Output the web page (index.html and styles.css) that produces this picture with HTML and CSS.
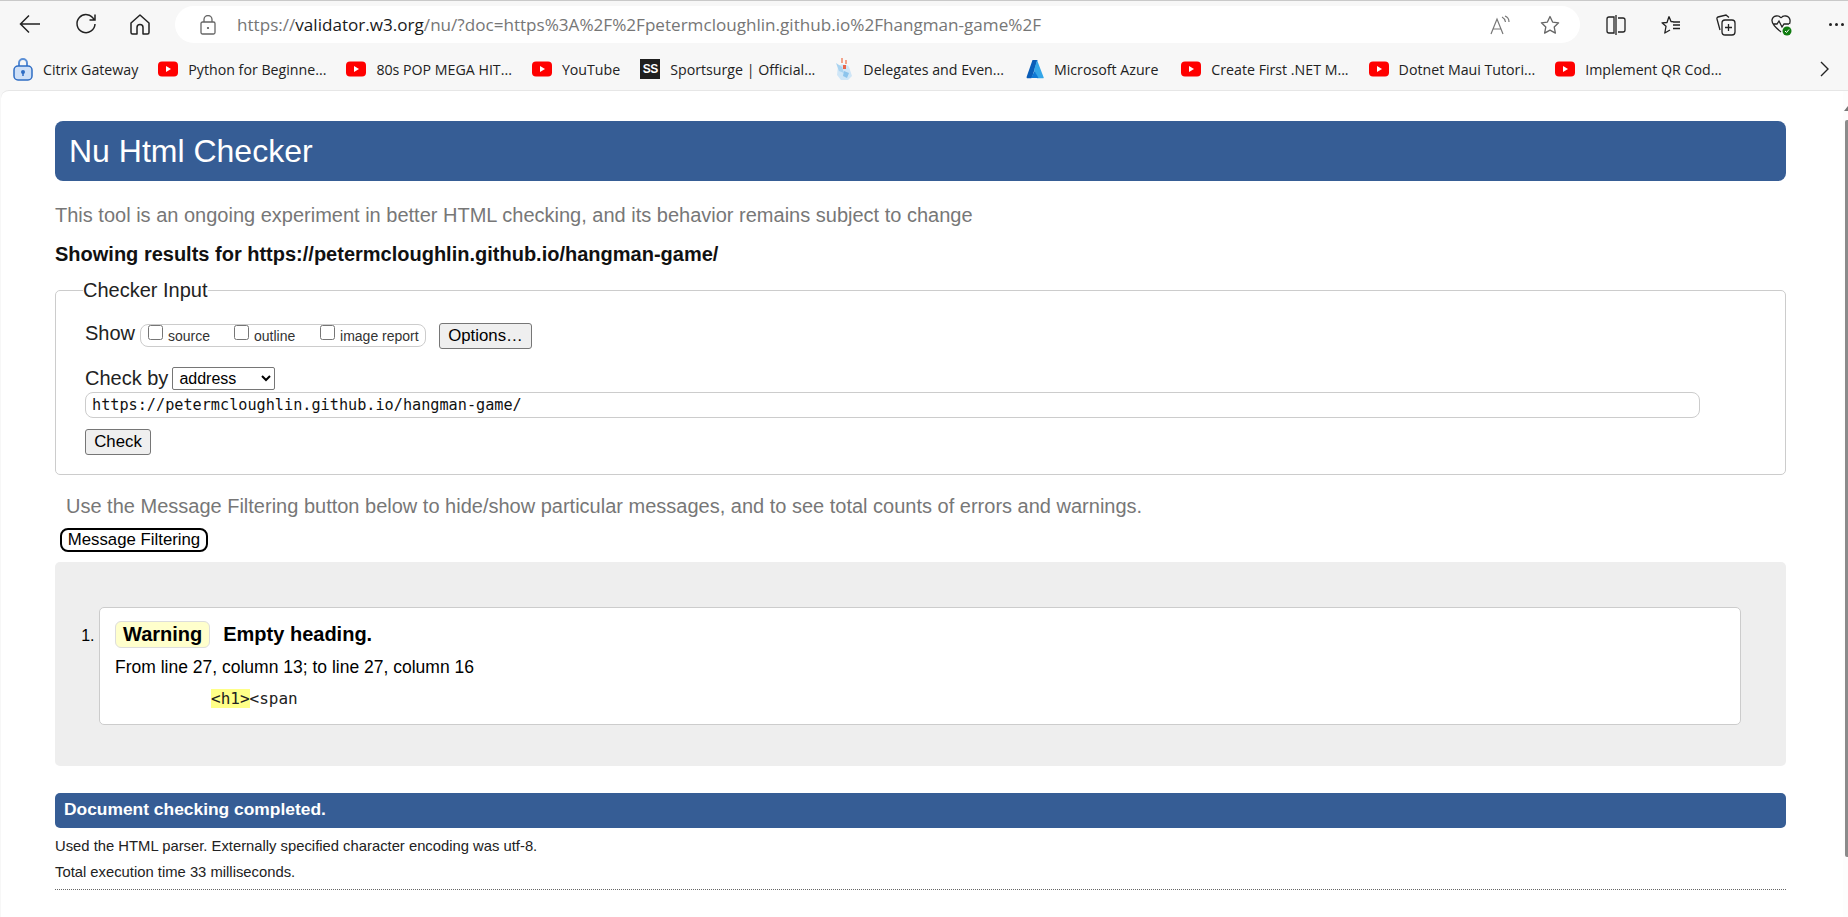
FILE: index.html
```html
<!DOCTYPE html>
<html lang="en">
<head>
    <meta charset="utf-8">
    <title>Nu Html Checker</title>
    <link rel="stylesheet" href="styles.css">
</head>
<body>
<svg class="defs" width="0" height="0">
    <symbol id="yt" viewBox="0 0 20 16">
        <rect x="0" y="0.5" width="20" height="15" rx="4" fill="#f00"/>
        <path d="M8 5l5 3-5 3z" fill="#fff"/>
    </symbol>
</svg>
<div class="toolbar">
    <button class="tool tool-back" aria-label="Back">
        <svg width="22" height="20" viewBox="0 0 22 20"><path d="M10 1.500L1.500 10 10 18.500M1.500 10H21" fill="none" stroke="#222" stroke-width="1.500"/></svg>
    </button>
    <button class="tool tool-reload" aria-label="Reload">
        <svg width="22" height="22" viewBox="0 0 22 22"><path d="M19 6.500A9 9 0 1 0 20 11M20 1.500V7h-5.500" fill="none" stroke="#222" stroke-width="1.500"/></svg>
    </button>
    <button class="tool tool-home" aria-label="Home">
        <svg width="20" height="21" viewBox="0 0 20 21"><path d="M10 1L1 9v9.500A1.500 1.500 0 0 0 2.500 20H7v-6.500a3 3 0 0 1 6 0V20h4.500a1.500 1.500 0 0 0 1.500-1.500V9z" fill="none" stroke="#222" stroke-width="1.500" stroke-linejoin="round"/></svg>
    </button>
    <div class="address">
        <svg class="lock" width="16" height="20" viewBox="0 0 16 20"><path d="M4 7V4.500a4 4 0 0 1 8 0V7" fill="none" stroke="#666" stroke-width="1.300"/><rect x="1" y="7" width="14" height="12" rx="1.500" fill="none" stroke="#666" stroke-width="1.300"/><circle cx="8" cy="13" r="1.100" fill="#555"/></svg>
        <span class="url">https://<b>validator.w3.org</b>/nu/?doc=https%3A%2F%2Fpetermcloughlin.github.io%2Fhangman-game%2F</span>
        <svg class="read" width="20" height="20" viewBox="0 0 20 20"><path d="M1 19L7 4l6 15M3 14h8M12 2c2 1 3 2.500 3.500 5M15 1c2.500 1 4 3 4 6" fill="none" stroke="#777" stroke-width="1.200"/></svg>
        <svg class="star" width="20" height="20" viewBox="0 0 20 20"><path d="M10 1.500l2.600 5.600 6 .7-4.400 4.200 1.200 6.100L10 15.100l-5.400 3 1.200-6.100L1.400 7.800l6-.7z" fill="none" stroke="#666" stroke-width="1.300" stroke-linejoin="round"/></svg>
    </div>
    <div class="tool-right">
        <svg width="20" height="20" viewBox="0 0 20 20"><path d="M8 2H3a2 2 0 0 0-2 2v12a2 2 0 0 0 2 2h5zM10 0v20M12 3h5a2 2 0 0 1 2 2v10a2 2 0 0 1-2 2h-5" fill="none" stroke="#222" stroke-width="1.300"/></svg>
        <svg width="20" height="20" viewBox="0 0 20 20"><path d="M8 1.500L6 7.500 1 7.800l4 3.500L3.800 18l5.200-3M8 1.500l2 5 3 .3M12 10h7M12 7h7M12 13.500h7" fill="none" stroke="#222" stroke-width="1.300" stroke-linejoin="round"/></svg>
        <svg width="20" height="22" viewBox="0 0 20 22"><rect x="6" y="6" width="13" height="15" rx="3" fill="none" stroke="#222" stroke-width="1.300"/><path d="M12.500 10v7M9 13.500h7" fill="none" stroke="#222" stroke-width="1.300"/><path d="M13 3.500L10 1 2 3a1.500 1.500 0 0 0-1 2l3 11" fill="none" stroke="#222" stroke-width="1.300"/></svg>
        <svg width="21" height="22" viewBox="0 0 21 22"><path d="M10 4C8 1 2 1 1 6c-.5 4 4 8 9 12M10 4c2-3 8-3 9 2 .2 1.500 0 2.500-.5 4M2 10h4l2-3 3 6 2-3h5" fill="none" stroke="#222" stroke-width="1.300"/><circle cx="16" cy="17" r="4.500" fill="#107c10"/><path d="M14 17l1.500 1.500 2.500-3" fill="none" stroke="#fff" stroke-width="1"/></svg>
        <span class="more"><i></i><i></i><i></i></span>
    </div>
</div>

<div class="bookmarks">
    <a class="bookmark">
        <svg width="20" height="24" viewBox="0 0 20 24"><path d="M6 10V6a4 4 0 0 1 8 0v4" fill="none" stroke="#5b8fd6" stroke-width="2"/><rect x="1" y="9" width="18" height="14" rx="4" fill="#cfe0f7" stroke="#2f6dc4" stroke-width="1.500"/><circle cx="10" cy="15" r="2" fill="#2f6dc4"/><path d="M10 15v4" stroke="#2f6dc4" stroke-width="1.500"/></svg>
        Citrix Gateway
    </a>
    <a class="bookmark"><svg class="yt-icon"><use href="#yt"/></svg>Python for Beginne...</a>
    <a class="bookmark"><svg class="yt-icon"><use href="#yt"/></svg>80s POP MEGA HIT...</a>
    <a class="bookmark"><svg class="yt-icon"><use href="#yt"/></svg>YouTube</a>
    <a class="bookmark"><span class="ss-icon">SS</span>Sportsurge | Official...</a>
    <a class="bookmark">
        <svg width="18" height="22" viewBox="0 0 18 22"><path d="M3 8c3-2 9-2 11 1l3 9-4 4H6l-4-5z" fill="#cfe6f7"/><path d="M6 0h2v5H6zM10 2h2v4h-2z" fill="#f2a48c"/><path d="M1 5l6 4 2 6-5-2z" fill="#a9d3f0"/><path d="M8 7h3v4H8z" fill="#e8664a"/><path d="M9 13l5 2-2 5-4-2z" fill="#8cc4ec"/></svg>
        Delegates and Even...
    </a>
    <a class="bookmark bookmark-azure">
        <svg width="18" height="19" viewBox="0 0 18 19"><path d="M6.500 0h5L6 17.500a1 1 0 0 1-1 .7H1l-.5-1z" fill="#0a5db8"/><path d="M11 0l6.700 17.500a.5.5 0 0 1-.5.7H11L8 10z" fill="#35a6e8"/><path d="M8.500 11l4 7H5z" fill="#0f78d4"/></svg>
        Microsoft Azure
    </a>
    <a class="bookmark"><svg class="yt-icon"><use href="#yt"/></svg>Create First .NET M...</a>
    <a class="bookmark"><svg class="yt-icon"><use href="#yt"/></svg>Dotnet Maui Tutori...</a>
    <a class="bookmark"><svg class="yt-icon"><use href="#yt"/></svg>Implement QR Cod...</a>
    <svg class="chevron" width="9" height="16" viewBox="0 0 9 16"><path d="M1 1l7 7-7 7" fill="none" stroke="#222" stroke-width="1.400"/></svg>
</div>

<div class="viewport">
    <div class="page">
        <h1 class="title">Nu Html Checker</h1>
        <p class="intro">This tool is an ongoing experiment in better HTML checking, and its behavior remains subject to change</p>
        <p class="showing">Showing results for https://petermcloughlin.github.io/hangman-game/</p>

        <form action="">
            <fieldset class="checker">
                <legend>Checker Input</legend>
                <div class="show-row">
                    <span class="field-label">Show</span>
                    <div class="show-options">
                        <label class="opt opt-source"><input type="checkbox"> source</label>
                        <label class="opt opt-outline"><input type="checkbox"> outline</label>
                        <label class="opt"><input type="checkbox"> image report</label>
                    </div>
                    <button type="button" class="btn btn-options">Options…</button>
                </div>
                <div class="check-row">
                    <span class="field-label">Check by</span>
                    <select class="check-select"><option>address</option></select>
                </div>
                <input class="doc-input" value="https://petermcloughlin.github.io/hangman-game/">
                <button type="button" class="btn btn-check">Check</button>
            </fieldset>
        </form>

        <p class="filter-hint">Use the Message Filtering button below to hide/show particular messages, and to see total counts of errors and warnings.</p>
        <button type="button" class="btn-filter">Message Filtering</button>

        <div class="results">
            <ol class="messages">
                <li class="message">
                    <div class="message-head">
                        <strong class="badge">Warning</strong>
                        <strong>Empty heading.</strong>
                    </div>
                    <p class="location">From line 27, column 13; to line 27, column 16</p>
                    <code class="extract"><mark>&lt;h1&gt;</mark>&lt;span</code>
                </li>
            </ol>
        </div>

        <h2 class="done">Document checking completed.</h2>
        <p class="stats first">Used the HTML parser. Externally specified character encoding was utf-8.</p>
        <p class="stats">Total execution time 33 milliseconds.</p>
        <hr class="rule">
    </div>
    <div class="scrollbar">
        <span class="scroll-up"></span>
        <span class="scroll-thumb"></span>
    </div>
</div>
</body>
</html>
```

FILE: styles.css
```css
html, body {
    margin: 0;
    height: 917px;
    overflow: hidden;
}

body {
    background: #f7f7f7;
    font-family: "Liberation Sans", Arial, sans-serif;
    color: #000;
    display: flex;
    flex-direction: column;
}

.defs {
    position: absolute;
}

/* browser chrome */
.toolbar {
    height: 50px;
    box-sizing: border-box;
    border-top: 1px solid #c9c9c9;
    padding-top: 5px;
    display: flex;
    align-items: flex-start;
}

.tool {
    background: none;
    border: none;
    padding: 0;
    display: flex;
}

.tool-back { margin: 8px 0 0 19px; }
.tool-reload { margin: 7px 0 0 34px; }
.tool-home { margin: 8px 0 0 33px; }

.address {
    width: 1405px;
    height: 37px;
    margin-left: 25px;
    background: #fff;
    border-radius: 19px;
    display: flex;
    align-items: center;
}

.lock { margin-left: 25px; }

.url {
    margin-left: 21px;
    font-family: "Open Sans", sans-serif;
    font-size: 17.1px;
    color: #767676;
    white-space: nowrap;
}

.url b {
    font-weight: 400;
    color: #1a1a1a;
}

.read { margin-left: auto; }

.star { margin: 0 20px 0 30px; }

.tool-right {
    flex: 1;
    height: 37px;
    padding-left: 26px;
    display: flex;
    align-items: center;
    gap: 35px;
}

.more {
    display: flex;
    gap: 3px;
    margin-left: 2px;
}

.more i {
    width: 3px;
    height: 3px;
    border-radius: 50%;
    background: #222;
}

.bookmarks {
    height: 40px;
    box-sizing: border-box;
    padding: 0 0 2px 13px;
    display: flex;
    align-items: center;
    gap: 20px;
    font-family: "Open Sans", sans-serif;
    font-size: 14.2px;
    color: #222;
    white-space: nowrap;
}

.bookmark {
    display: flex;
    align-items: center;
    gap: 10px;
}

.bookmark-azure {
    margin: 0 3px 0 2px;
}

.yt-icon {
    width: 20px;
    height: 16px;
}

.ss-icon {
    width: 20px;
    height: 20px;
    background: #1f1f1f;
    color: #fff;
    font-family: "Liberation Sans", sans-serif;
    font-weight: 700;
    font-size: 12px;
    letter-spacing: -0.5px;
    line-height: 20px;
    text-align: center;
}

.chevron { margin-left: auto; margin-right: 19px; }

/* page */
.viewport {
    flex: 1;
    margin-left: 1px;
    background: #fff;
    border-top: 1px solid #e6e6e6;
    border-top-left-radius: 8px;
    display: flex;
}

.page {
    width: 1731px;
    margin-left: 54px;
    padding-top: 30px;
}

.title {
    margin: 0;
    height: 60px;
    padding-left: 14px;
    background: #365d95;
    border-radius: 8px;
    color: #fff;
    font-weight: 400;
    font-size: 32px;
    line-height: 60px;
}

.intro {
    margin: 22px 0 0;
    font-size: 20px;
    line-height: 24px;
    color: #777;
}

.showing {
    margin: 15px 0 0;
    font-size: 20px;
    font-weight: 700;
    line-height: 24px;
    color: #111;
}

.checker {
    margin: 12px 0 0;
    padding: 0 0 19px 29px;
    border: 1px solid #ccc;
    border-radius: 5px;
}

.checker legend {
    margin-left: -2px;
    padding: 0;
    font-size: 20px;
    line-height: 24px;
    color: #222;
}

.field-label {
    font-size: 20px;
    line-height: 22px;
    color: #222;
}

.show-row {
    display: flex;
    align-items: flex-start;
    margin-top: 20px;
}

.show-options {
    display: flex;
    height: 21px;
    margin: 2px 0 0 5px;
    padding-left: 7px;
    width: 277px;
    border: 1px solid #ccc;
    border-radius: 8px;
    font-size: 14px;
    color: #333;
}

.opt {
    display: flex;
    align-items: flex-start;
    gap: 5px;
    line-height: 23px;
}

.opt input {
    width: 15px;
    height: 15px;
    margin: 0;
}

.opt-source { width: 86px; }
.opt-outline { width: 86px; }

.btn {
    background: #efefef;
    border: 1px solid #767676;
    border-radius: 3px;
    padding: 0;
    font-family: "Liberation Sans", sans-serif;
    font-size: 16.8px;
    color: #000;
}

.btn-options {
    width: 93px;
    height: 26px;
    margin: 1px 0 0 13px;
}

.check-row {
    display: flex;
    align-items: flex-start;
    gap: 4px;
    margin-top: 18px;
}

.check-select {
    width: 103px;
    height: 23px;
    padding-left: 2px;
    font-family: "Liberation Sans", sans-serif;
    font-size: 16px;
    background: #fff;
    border: 1px solid #767676;
    border-radius: 2px;
}

.doc-input {
    display: block;
    width: 1615px;
    height: 26px;
    box-sizing: border-box;
    margin-top: 2px;
    padding: 0 6px;
    border: 1px solid #ccc;
    border-radius: 8px;
    font-family: "DejaVu Sans Mono", monospace;
    font-size: 15.2px;
    color: #111;
}

.btn-check {
    display: block;
    width: 66px;
    height: 26px;
    margin-top: 11px;
}

.filter-hint {
    margin: 19px 0 0 11px;
    font-size: 20px;
    line-height: 24px;
    color: #777;
}

.btn-filter {
    display: block;
    width: 148px;
    height: 24px;
    margin: 10px 0 0 5px;
    padding: 0;
    background: #fff;
    border: 2px solid #000;
    border-radius: 8px;
    font-family: "Liberation Sans", sans-serif;
    font-size: 16.8px;
}

.results {
    margin-top: 10px;
    padding: 45px 45px 41px 44px;
    background: #eee;
    border-radius: 5px;
}

.messages {
    margin: 0;
    padding: 0;
    font-size: 16px;
}

.message {
    margin: 0;
    padding: 13px 16px 15px 15px;
    background: #fff;
    border: 1px solid #ccc;
    border-radius: 5px;
}

.message-head {
    display: flex;
    align-items: center;
    gap: 13px;
    font-size: 20px;
    line-height: 27px;
}

.badge {
    height: 25px;
    padding: 0 7px;
    background: #ffc;
    border: 1px solid #ddd;
    border-radius: 6px;
    line-height: 25px;
}

.location {
    margin: 8px 0 0;
    font-size: 17.5px;
    line-height: 22px;
}

.extract {
    display: block;
    margin-top: 11px;
    padding-left: 96px;
    font-family: "DejaVu Sans Mono", monospace;
    font-size: 16px;
    line-height: 20px;
    color: #222;
}

.extract mark {
    background: #ff8;
    color: inherit;
}

.done {
    margin: 27px 0 0;
    height: 35px;
    padding-left: 9px;
    background: #365d95;
    border-radius: 5px;
    color: #fff;
    font-size: 17.4px;
    font-weight: 700;
    line-height: 33px;
}

.stats {
    margin: 6px 0 0;
    font-size: 14.8px;
    line-height: 20px;
    color: #222;
}

.stats.first {
    margin-top: 8px;
}

.rule {
    margin: 7px 0 0;
    border: none;
    border-top: 1px dotted #666;
}

.scrollbar {
    margin-left: auto;
    width: 5px;
    display: flex;
    flex-direction: column;
    align-items: flex-end;
    background: #fdfdfd;
}

.scroll-up {
    margin-top: 15px;
    border-left: 4px solid transparent;
    border-bottom: 5px solid #777;
}

.scroll-thumb {
    width: 3px;
    height: 737px;
    margin-top: 9px;
    background: #8b8b8b;
    border-radius: 2px 0 0 2px;
}
```
